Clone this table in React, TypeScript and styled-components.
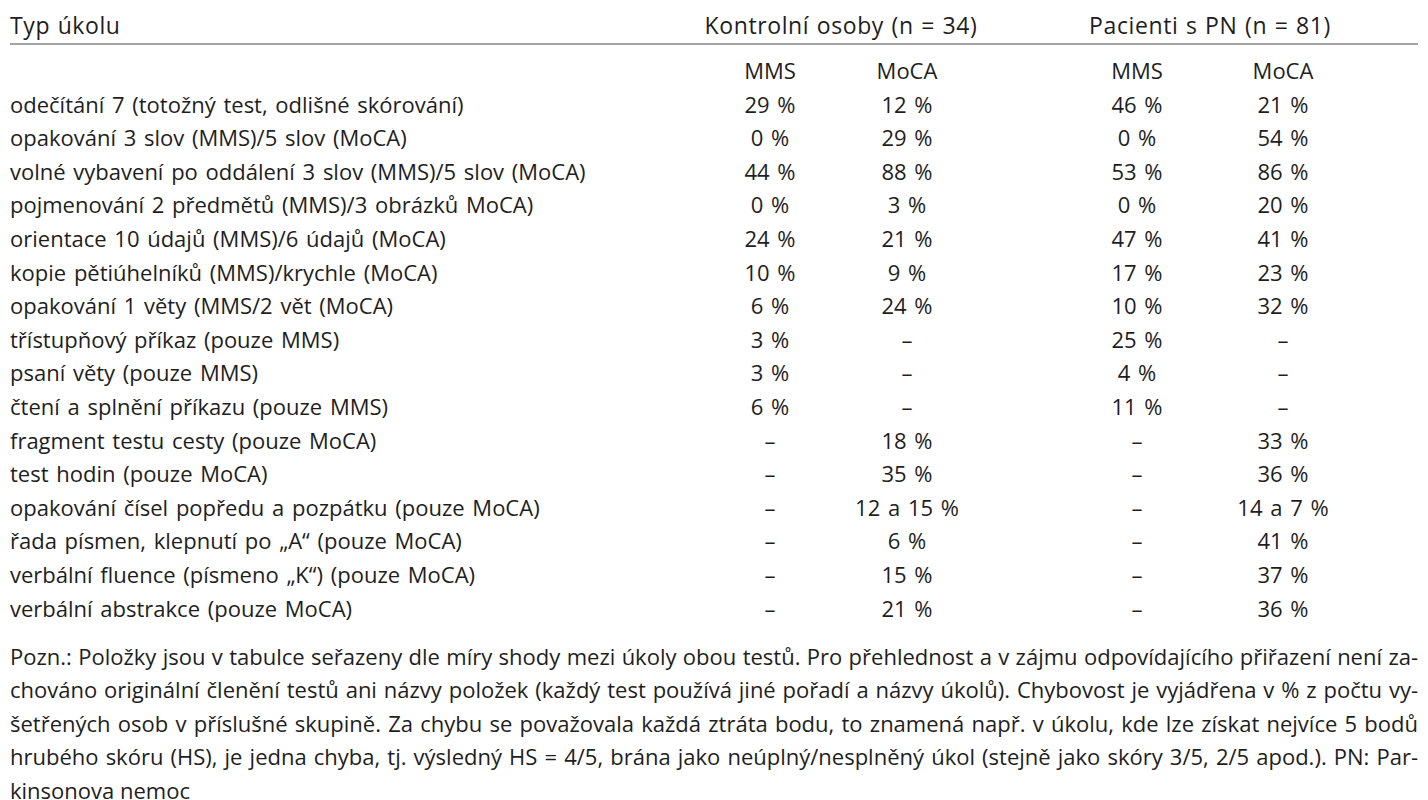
import React from "react";
import styled, { createGlobalStyle } from "styled-components";

const Global = createGlobalStyle`
  html, body { margin: 0; padding: 0; background: #ffffff; }
  body {
    font-family: "Open Sans", "Noto Sans", "Liberation Sans", sans-serif;
    color: #1e1e1e;
  }
`;

const Page = styled.div`
  width: 1408px;
  padding: 9px 10px 0 10px;
  font-size: 22px;
  word-spacing: 2px;
`;

const Table = styled.div`
  display: grid;
  grid-template-columns: 694px 132px 142px 86px 146px 146px 1fr;
  line-height: 33.6px;
`;

const HeadCell = styled.div<{ $span?: string }>`
  grid-column: ${(p) => p.$span ?? "auto"};
  text-align: ${(p) => (p.$span ? "center" : "left")};
  font-size: 23px;
  letter-spacing: 0.6px;
  word-spacing: 1px;
  line-height: 33px;
  border-bottom: 2px solid #a3a3a3;
  padding-bottom: 1px;
  margin-bottom: 9px;
  white-space: nowrap;
`;

const HeadFill = styled.div`
  border-bottom: 2px solid #a3a3a3;
  padding-bottom: 1px;
  margin-bottom: 9px;
`;

const Label = styled.div`
  grid-column: 1;
  white-space: nowrap;
`;

const Value = styled.div<{ $col: number }>`
  grid-column: ${(p) => p.$col};
  text-align: center;
  white-space: nowrap;
`;

const Note = styled.div`
  margin-top: 15px;
  line-height: 33.25px;
  word-spacing: 0;
`;

const NoteLine = styled.div<{ $last?: boolean }>`
  text-align: ${(p) => (p.$last ? "left" : "justify")};
  text-align-last: ${(p) => (p.$last ? "left" : "justify")};
  white-space: nowrap;
  ${(p) => (p.$last ? "line-height: 20px; margin-top: 6.6px;" : "")}
`;

const rows: [string, string, string, string, string][] = [
  ["odečítání 7 (totožný test, odlišné skórování)", "29 %", "12 %", "46 %", "21 %"],
  ["opakování 3 slov (MMS)/5 slov (MoCA)", "0 %", "29 %", "0 %", "54 %"],
  ["volné vybavení po oddálení 3 slov (MMS)/5 slov (MoCA)", "44 %", "88 %", "53 %", "86 %"],
  ["pojmenování 2 předmětů (MMS)/3 obrázků MoCA)", "0 %", "3 %", "0 %", "20 %"],
  ["orientace 10 údajů (MMS)/6 údajů (MoCA)", "24 %", "21 %", "47 %", "41 %"],
  ["kopie pětiúhelníků (MMS)/krychle (MoCA)", "10 %", "9 %", "17 %", "23 %"],
  ["opakování 1 věty (MMS/2 vět (MoCA)", "6 %", "24 %", "10 %", "32 %"],
  ["třístupňový příkaz (pouze MMS)", "3 %", "–", "25 %", "–"],
  ["psaní věty (pouze MMS)", "3 %", "–", "4 %", "–"],
  ["čtení a splnění příkazu (pouze MMS)", "6 %", "–", "11 %", "–"],
  ["fragment testu cesty (pouze MoCA)", "–", "18 %", "–", "33 %"],
  ["test hodin (pouze MoCA)", "–", "35 %", "–", "36 %"],
  ["opakování čísel popředu a pozpátku (pouze MoCA)", "–", "12 a 15 %", "–", "14 a 7 %"],
  ["řada písmen, klepnutí po „A“ (pouze MoCA)", "–", "6 %", "–", "41 %"],
  ["verbální fluence (písmeno „K“) (pouze MoCA)", "–", "15 %", "–", "37 %"],
  ["verbální abstrakce (pouze MoCA)", "–", "21 %", "–", "36 %"],
];

const noteLines = [
  "Pozn.: Položky jsou v tabulce seřazeny dle míry shody mezi úkoly obou testů. Pro přehlednost a v zájmu odpovídajícího přiřazení není za-",
  "chováno originální členění testů ani názvy položek (každý test používá jiné pořadí a názvy úkolů). Chybovost je vyjádřena v % z počtu vy-",
  "šetřených osob v příslušné skupině. Za chybu se považovala každá ztráta bodu, to znamená např. v úkolu, kde lze získat nejvíce 5 bodů",
  "hrubého skóru (HS), je jedna chyba, tj. výsledný HS = 4/5, brána jako neúplný/nesplněný úkol (stejně jako skóry 3/5, 2/5 apod.). PN: Par-",
  "kinsonova nemoc",
];

const valueCols = [2, 3, 5, 6];

export default function App() {
  return (
    <>
      <Global />
      <Page>
        <Table>
          <HeadCell>Typ úkolu</HeadCell>
          <HeadCell $span="2 / span 2">Kontrolní osoby (n = 34)</HeadCell>
          <HeadFill />
          <HeadCell $span="5 / span 2">Pacienti s PN (n = 81)</HeadCell>
          <HeadFill />

          <Label />
          <Value $col={2}>MMS</Value>
          <Value $col={3}>MoCA</Value>
          <Value $col={5}>MMS</Value>
          <Value $col={6}>MoCA</Value>

          {rows.map((r) => (
            <React.Fragment key={r[0]}>
              <Label>{r[0]}</Label>
              {r.slice(1).map((v, i) => (
                <Value key={i} $col={valueCols[i]}>
                  {v}
                </Value>
              ))}
            </React.Fragment>
          ))}
        </Table>
        <Note>
          {noteLines.map((l, i) => (
            <NoteLine key={i} $last={i === noteLines.length - 1}>
              {l}
            </NoteLine>
          ))}
        </Note>
      </Page>
    </>
  );
}
